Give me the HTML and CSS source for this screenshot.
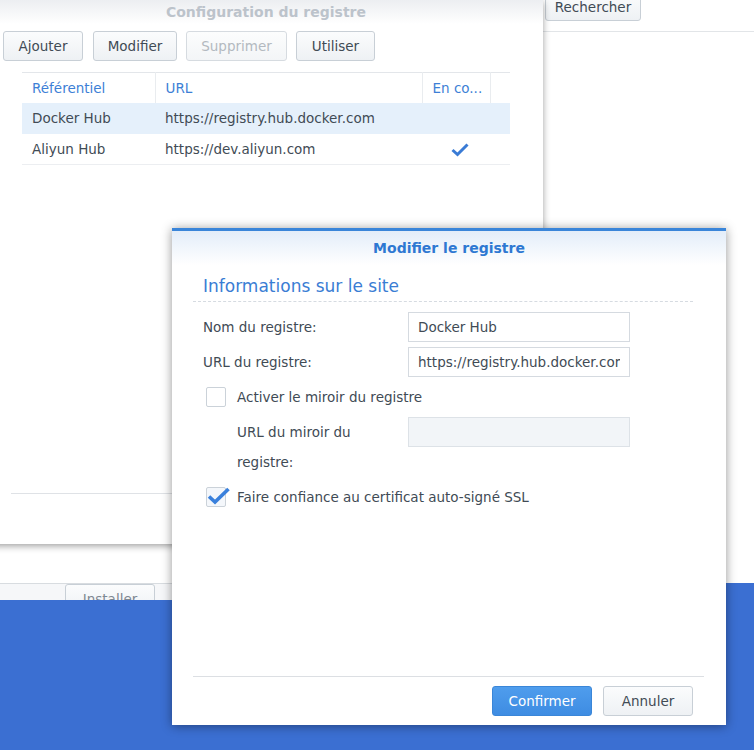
FILE: index.html
```html
<!DOCTYPE html>
<html lang="fr">
<head>
<meta charset="utf-8">
<title>Modifier le registre</title>
<link rel="stylesheet" href="styles.css">
</head>
<body>
<div class="desktop">
  <div class="app-window">
    <div class="app-toolbar">
      <button class="btn btn-search">Rechercher</button>
    </div>
  </div>
  <div class="app-footer">
    <button class="btn btn-install">Installer</button>
  </div>

  <div class="config-dialog">
    <div class="cfg-title">Configuration du registre</div>
    <div class="cfg-body">
      <div class="cfg-toolbar">
        <button class="btn btn-add">Ajouter</button>
        <button class="btn btn-edit">Modifier</button>
        <button class="btn btn-del btn-disabled">Supprimer</button>
        <button class="btn btn-use">Utiliser</button>
      </div>
      <table class="reg-table">
        <colgroup>
          <col class="c-name"><col class="c-url"><col class="c-use"><col class="c-rest">
        </colgroup>
        <thead>
          <tr><th>Référentiel</th><th>URL</th><th>En co...</th><th class="th-last"></th></tr>
        </thead>
        <tbody>
          <tr class="selected"><td>Docker Hub</td><td>https://registry.hub.docker.com</td><td></td><td></td></tr>
          <tr><td>Aliyun Hub</td><td>https://dev.aliyun.com</td><td class="td-check">
            <svg class="tick" width="18" height="14" viewBox="0 0 18 14"><path d="M1.5 7 L6.5 11.5 L16.5 1.5" fill="none" stroke="#3a7bd5" stroke-width="3"/></svg>
          </td><td></td></tr>
        </tbody>
      </table>
    </div>
    <div class="cfg-footer"></div>
  </div>

  <div class="modal">
    <div class="modal-header">Modifier le registre</div>
    <div class="modal-body">
      <div class="legend">Informations sur le site</div>
      <div class="form">
        <div class="row">
          <label class="lbl">Nom du registre:</label>
          <input class="field" type="text" value="Docker Hub">
        </div>
        <div class="row">
          <label class="lbl">URL du registre:</label>
          <input class="field" type="text" value="https://registry.hub.docker.com">
        </div>
        <div class="row row-check">
          <span class="checkbox"></span>
          <span class="check-label">Activer le miroir du registre</span>
        </div>
        <div class="row row-sub">
          <label class="lbl lbl-sub">URL du miroir du registre:</label>
          <input class="field field-disabled" type="text" value="" disabled>
        </div>
        <div class="row row-check">
          <span class="checkbox checked">
            <svg class="big-tick" width="24" height="20" viewBox="0 0 24 20"><path d="M2 10.5 L8 16 L21.5 3" fill="none" stroke="#3a80dc" stroke-width="3.6"/></svg>
          </span>
          <span class="check-label">Faire confiance au certificat auto-signé SSL</span>
        </div>
      </div>
    </div>
    <div class="modal-footer">
      <button class="btn btn-primary">Confirmer</button>
      <button class="btn btn-cancel">Annuler</button>
    </div>
  </div>
</div>
</body>
</html>
```

FILE: styles.css
```css
html, body {
  margin: 0;
  padding: 0;
}

body {
  font-family: "DejaVu Sans", Verdana, sans-serif;
  font-size: 13.5px;
  color: #414b55;
}

.desktop {
  position: relative;
  width: 754px;
  height: 750px;
  overflow: hidden;
  background: #3b6fd2;
}

/* generic button */
.btn {
  height: 30px;
  box-sizing: border-box;
  border: 1px solid #c8cfd6;
  border-radius: 3px;
  background: linear-gradient(#fbfcfd, #eef1f4);
  font: inherit;
  color: #414b55;
  padding: 0;
  margin: 0;
  white-space: nowrap;
  text-align: center;
}

.btn-disabled {
  color: #b3b9c0;
  border-color: #d6dbe0;
  background: linear-gradient(#fcfdfd, #f3f5f7);
}

/* background application window */
.app-window {
  position: absolute;
  left: 0;
  top: 0;
  width: 754px;
  height: 583px;
  background: #fff;
}

.app-toolbar {
  height: 32px;
  box-sizing: border-box;
  border-bottom: 1px solid #e2e5e8;
  padding-left: 545px;
  display: flex;
  align-items: flex-start;
}

.btn-search {
  margin-top: -8px;
  width: 96px;
  height: 29px;
}

.app-footer {
  position: absolute;
  left: 0;
  top: 583px;
  width: 500px;
  height: 17px;
  box-sizing: border-box;
  border-top: 1px solid #d8dce0;
  background: #f6f7f9;
  overflow: hidden;
  padding-left: 65px;
}

.btn-install {
  width: 90px;
  margin-top: 0;
  color: #7f8892;
  display: block;
}

/* registry configuration dialog */
.config-dialog {
  position: absolute;
  left: -11px;
  top: 0;
  width: 554px;
  height: 544px;
  background: #fff;
  box-shadow: 0 2px 7px rgba(0, 0, 0, 0.38);
  display: flex;
  flex-direction: column;
}

.cfg-title {
  height: 24px;
  line-height: 24px;
  text-align: center;
  font-size: 14px;
  font-weight: bold;
  color: #bcc3cb;
  background: linear-gradient(#eceef1, #ffffff);
}

.cfg-body {
  flex: 1;
}

.cfg-toolbar {
  display: flex;
  gap: 9px;
  padding: 7px 0 0 14px;
}

.btn-add { width: 80px; margin-right: 1px; }
.btn-edit { width: 84px; }
.btn-del { width: 101px; }
.btn-use { width: 79px; }

.reg-table {
  margin: 11px 0 0 33px;
  width: 488px;
  table-layout: fixed;
  border-collapse: collapse;
}

.c-name { width: 133px; }
.c-url { width: 267px; }
.c-use { width: 68px; }
.c-rest { width: 20px; }

.reg-table th {
  height: 30px;
  padding: 0 0 0 10px;
  text-align: left;
  font-weight: normal;
  color: #3d7fd6;
  border-top: 1px solid #e3e6ea;
  border-right: 1px solid #e9ecef;
  white-space: nowrap;
  overflow: hidden;
}

.reg-table th.th-last {
  border-right: none;
}

.reg-table td {
  height: 30px;
  padding: 0 0 0 10px;
  border-bottom: 1px solid #eceef1;
  white-space: nowrap;
  overflow: hidden;
}

.reg-table tr.selected td {
  background: #e5f0fb;
  border-bottom-color: #e5f0fb;
}

.reg-table td.td-check {
  padding: 0;
  text-align: center;
}

.tick {
  display: inline-block;
  vertical-align: middle;
  margin-left: 8px;
}

.cfg-footer {
  height: 51px;
  margin-left: 22px;
  border-top: 1px solid #dfe2e6;
  box-sizing: border-box;
}

/* edit registry modal */
.modal {
  position: absolute;
  left: 172px;
  top: 228px;
  width: 554px;
  height: 497px;
  box-sizing: border-box;
  background: #fff;
  border-top: 3px solid #3a85d9;
  box-shadow: 0 1px 10px rgba(0, 0, 0, 0.42);
  display: flex;
  flex-direction: column;
}

.modal-header {
  height: 34px;
  line-height: 34px;
  text-align: center;
  font-size: 14px;
  font-weight: bold;
  color: #2e78d2;
  background: linear-gradient(#e3edf9, #ffffff);
}

.modal-body {
  flex: 1;
  padding: 0 33px 0 21px;
}

.legend {
  margin-top: 11px;
  height: 20px;
  line-height: 20px;
  padding: 0 0 5px 10px;
  font-size: 17px;
  color: #3a7dd4;
  border-bottom: 1px dashed #d6dbe1;
}

.form {
  margin-top: 10px;
  padding-left: 10px;
  display: flex;
  flex-direction: column;
  gap: 5px;
}

.row {
  display: flex;
  align-items: center;
  min-height: 30px;
}

.lbl {
  width: 205px;
  flex-shrink: 0;
  line-height: 30px;
}

.field {
  width: 222px;
  height: 30px;
  box-sizing: border-box;
  border: 1px solid #d5dae0;
  border-radius: 0;
  padding: 0 9px;
  font: inherit;
  color: #414b55;
  background: #fff;
  outline: none;
  flex-shrink: 0;
}

.field-disabled {
  background: #f2f5f8;
  border-color: #dde2e7;
}

.row-check {
  padding-left: 3px;
}

.checkbox {
  position: relative;
  width: 20px;
  height: 20px;
  box-sizing: border-box;
  border: 1px solid #cbd2d9;
  border-radius: 2px;
  background: #fff;
  flex-shrink: 0;
}

.checkbox.checked {
  background: #f4f7fb;
}

.big-tick {
  position: absolute;
  left: 0;
  top: -2px;
}

.check-label {
  margin-left: 11px;
  line-height: 30px;
}

.row-sub {
  align-items: flex-start;
  padding-left: 34px;
}

.lbl-sub {
  width: 171px;
}

.modal-footer {
  margin: 0 22px 0 21px;
  border-top: 1px solid #dcdfe3;
  padding: 9px 11px 9px 0;
  display: flex;
  justify-content: flex-end;
  gap: 11px;
}

.btn-primary {
  width: 100px;
  color: #fff;
  border-color: #3a86d8;
  background: linear-gradient(#4f9ded, #3e8ce2);
}

.btn-cancel {
  width: 90px;
}
```
